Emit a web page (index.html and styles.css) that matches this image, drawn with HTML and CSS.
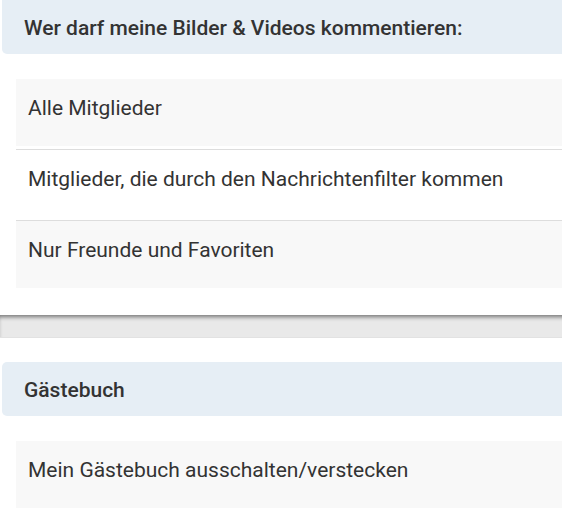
FILE: index.html
```html
<!DOCTYPE html>
<html lang="de">
<head>
<meta charset="utf-8">
<title>Einstellungen</title>
<link rel="stylesheet" href="styles.css">
</head>
<body>
<div class="page">
  <section class="section first">
    <div class="head">Wer darf meine Bilder &amp; Videos kommentieren:</div>
    <ul class="options">
      <li class="opt"><div class="label shaded">Alle Mitglieder</div></li>
      <li class="opt"><div class="label">Mitglieder, die durch den Nachrichtenfilter kommen</div></li>
      <li class="opt last"><div class="label shaded">Nur Freunde und Favoriten</div></li>
    </ul>
  </section>
  <div class="divider"></div>
  <section class="section">
    <div class="head">Gästebuch</div>
    <ul class="options">
      <li class="opt last"><div class="label shaded">Mein Gästebuch ausschalten/verstecken</div></li>
    </ul>
  </section>
</div>
</body>
</html>
```

FILE: styles.css
```css
html, body {
  margin: 0;
  padding: 0;
  background: #ffffff;
  overflow: hidden;
}
.page {
  width: 600px;
  font-family: Roboto, "Liberation Sans", sans-serif;
  color: #333333;
}
.section {
  padding: 0 0 27px 2px;
}
.section + .divider + .section {
  padding-top: 24px;
}
.head {
  background: #e6eef5;
  border-radius: 5px;
  padding: 16px 22px 14px;
  font-size: 21px;
  line-height: 24px;
  font-weight: 500;
  color: #333333;
}
.first .head {
  border-radius: 0 0 0 5px;
}
.options {
  list-style: none;
  margin: 25px 0 0 14px;
  padding: 0;
}
.opt {
  padding-bottom: 3px;
  border-bottom: 1px solid #dddddd;
}
.opt.last {
  padding-bottom: 0;
  border-bottom: none;
}
.label {
  font-size: 21px;
  line-height: 24px;
  padding: 17px 12px 26px;
}
.label.shaded {
  background: #f8f8f8;
}
.divider {
  height: 22px;
  background: #e9e9e9;
  box-shadow: inset 0 4px 4px -2px rgba(0, 0, 0, 0.5);
  border-bottom: 1px solid #e2e2e2;
}
```
